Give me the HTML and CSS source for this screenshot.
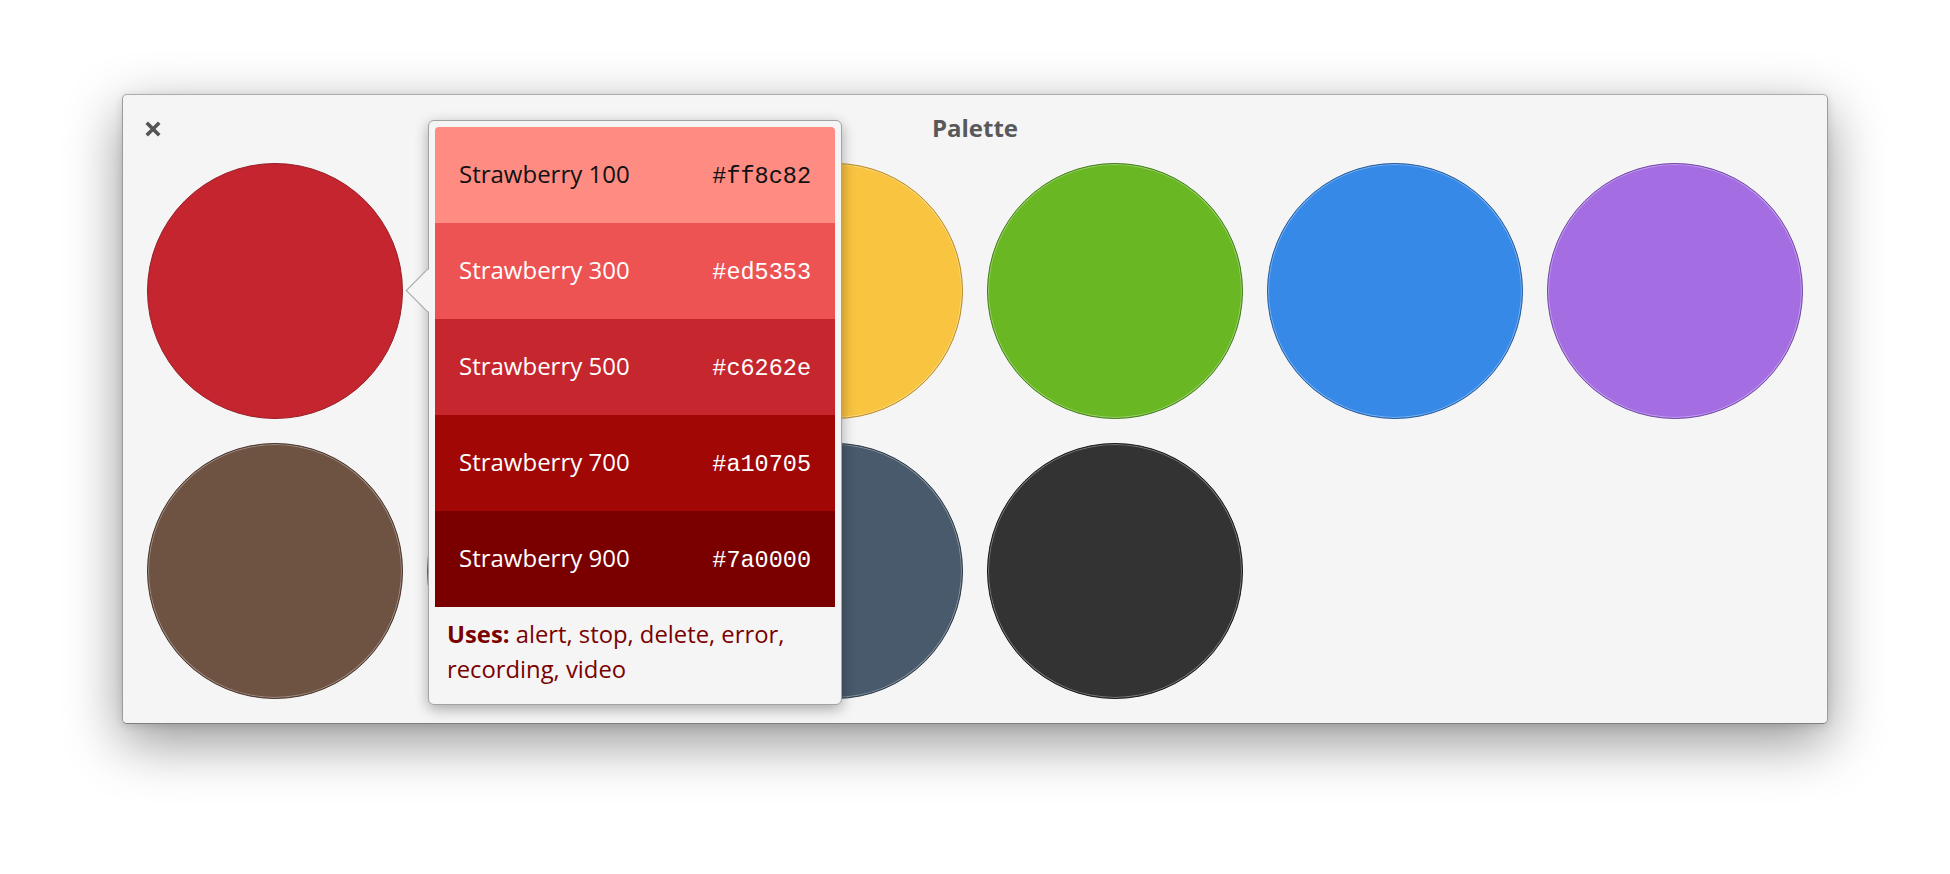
FILE: index.html
```html
<!DOCTYPE html>
<html lang="en">
<head>
<meta charset="utf-8">
<title>Palette</title>
<link rel="stylesheet" href="styles.css">
</head>
<body>
<div class="window">
  <header class="titlebar">
    <button class="close" aria-label="Close">
      <svg width="16" height="16" viewBox="0 0 16 16"><path d="M3 3 L13 13 M13 3 L3 13" stroke="#555" stroke-width="3.6" stroke-linecap="square" fill="none"/></svg>
    </button>
    <h1 class="title">Palette</h1>
    <span></span>
  </header>
  <div class="grid">
    <div class="dot dot-strawberry selected"></div>
    <div class="dot dot-orange"></div>
    <div class="dot dot-banana"></div>
    <div class="dot dot-lime"></div>
    <div class="dot dot-blueberry"></div>
    <div class="dot dot-grape"></div>
    <div class="dot dot-cocoa"></div>
    <div class="dot dot-silver"></div>
    <div class="dot dot-slate"></div>
    <div class="dot dot-black"></div>
  </div>
  <div class="popover">
    <div class="arrow"></div>
    <ul class="swatches">
      <li class="swatch s100"><span class="name">Strawberry 100</span><span class="hex">#ff8c82</span></li>
      <li class="swatch s300"><span class="name">Strawberry 300</span><span class="hex">#ed5353</span></li>
      <li class="swatch s500"><span class="name">Strawberry 500</span><span class="hex">#c6262e</span></li>
      <li class="swatch s700"><span class="name">Strawberry 700</span><span class="hex">#a10705</span></li>
      <li class="swatch s900"><span class="name">Strawberry 900</span><span class="hex">#7a0000</span></li>
    </ul>
    <p class="uses"><b>Uses:</b> alert, stop, delete, error, recording, video</p>
  </div>
</div>
</body>
</html>
```
FILE: styles.css
```css
* { box-sizing: border-box; }
html, body { margin: 0; background: #ffffff; }
body {
  padding: 94px 0 0 122px;
  font-family: "Open Sans", "Noto Sans", sans-serif;
  height: 874px;
  overflow: hidden;
}
.window {
  position: relative;
  width: 1706px;
  background: #f5f5f5;
  border: 1px solid #9c9c9c;
  border-top-color: #acacac;
  border-bottom-color: #7e7e7e;
  border-radius: 5px;
  box-shadow: 0 18px 55px rgba(0,0,0,0.42), 0 2px 8px rgba(0,0,0,0.12);
}
.titlebar {
  height: 68px;
  display: grid;
  grid-template-columns: 1fr auto 1fr;
  align-items: center;
  padding-left: 22px;
}
.close {
  justify-self: start;
  border: 0;
  background: none;
  padding: 0;
  width: 16px;
  height: 16px;
  display: flex;
}
.title {
  margin: 0;
  font-size: 24px;
  font-weight: 700;
  color: #595959;
  line-height: 32px;
  position: relative;
  left: -11px;
  top: -1px;
}
.grid {
  display: grid;
  grid-template-columns: repeat(6, 256px);
  grid-auto-rows: 256px;
  gap: 24px;
  padding: 0 24px 24px;
}
.dot {
  border-radius: 50%;
  border: 1px solid rgba(0,0,0,0.4);
  box-shadow: inset 0 0 0 1px rgba(255,255,255,0.35);
}
.dot.selected { box-shadow: none; border-color: #962028; }
.dot-strawberry { background: #c4252f; }
.dot-orange { background: #f37329; }
.dot-banana { background: #f9c440; border-color: #b88a26; }
.dot-lime { background: #68b723; border-color: #3f7c17; }
.dot-blueberry { background: #3689e6; border-color: #22599f; }
.dot-grape { background: #a56de2; border-color: #6f46a6; }
.dot-cocoa { background: #6e5242; border-color: #47322a; }
.dot-silver { background: #abacae; }
.dot-slate { background: #485a6c; border-color: #2a3643; }
.dot-black { background: #333333; border-color: #161616; }

.popover {
  position: absolute;
  top: 25px;
  left: 305px;
  width: 414px;
  padding: 6px;
  background: #f5f5f5;
  border: 1px solid #a3a3a3;
  border-radius: 6px;
  box-shadow: 0 4px 14px rgba(0,0,0,0.32);
}
.arrow {
  position: absolute;
  left: -17px;
  top: 154px;
  width: 31px;
  height: 31px;
  background: #f5f5f5;
  border-left: 1px solid #a3a3a3;
  border-bottom: 1px solid #a3a3a3;
  transform: rotate(45deg);
}
.swatches {
  position: relative;
  z-index: 1;
  list-style: none;
  margin: 0;
  padding: 0;
  border-radius: 4px 4px 0 0;
  overflow: hidden;
}
.swatch {
  height: 96px;
  display: flex;
  align-items: center;
  justify-content: space-between;
  padding: 0 24px;
  color: #ffffff;
}
.name { font-size: 24px; position: relative; top: -2px; }
.hex { font-family: "Liberation Mono", monospace; font-size: 23.5px; position: relative; top: 1px; }
.s100 { background: #ff8c82; color: #111; }
.s300 { background: #ed5353; }
.s500 { background: #c6262e; }
.s700 { background: #a10705; }
.s900 { background: #7a0000; }
.uses {
  position: relative;
  z-index: 1;
  margin: 0;
  padding: 10px 13px 11px 12px;
  font-size: 23.8px;
  line-height: 35px;
  color: #7a0000;
}
.uses b { font-weight: 700; }
```
